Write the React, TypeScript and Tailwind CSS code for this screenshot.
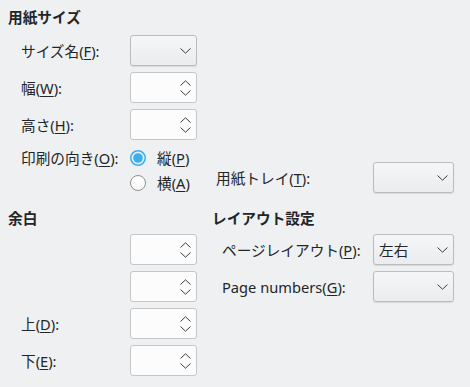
import React from 'react';

const font = '[font-family:"Noto_Sans","Noto_Sans_CJK_JP",sans-serif]';

const Chevron = ({ up = false }: { up?: boolean }) => (
  <svg width="11" height="6" viewBox="0 0 11 6" className="block">
    <path
      d={up ? 'M0.5 5.5 L5.5 0.8 L10.5 5.5' : 'M0.5 0.5 L5.5 5.2 L10.5 0.5'}
      fill="none"
      stroke="#3b3e41"
      strokeWidth="1"
    />
  </svg>
);

const Combo = ({ value = '', wide = false }: { value?: string; wide?: boolean }) => (
  <div
    className={`${wide ? 'w-[81px]' : 'w-[67px]'} h-[31px] rounded-[3px] border border-[#babcbe] bg-linear-to-b from-[#f5f6f7] to-[#ebeced] shadow-[0_1px_1px_rgba(0,0,0,0.1)] flex items-center justify-between pl-[5px] pr-[5px]`}
  >
    <span>{value}</span>
    <Chevron />
  </div>
);

const Spin = () => (
  <div className="w-[67px] h-[31px] rounded-[3px] border border-[#c4c6c8] bg-[#fcfcfc] flex flex-col items-end justify-center gap-[4px] pr-[5px]">
    <Chevron up />
    <Chevron />
  </div>
);

const Label = ({ pre, key_, post = '):' }: { pre: string; key_: string; post?: string }) => (
  <span className="whitespace-nowrap">
    {pre}
    <u className="underline-offset-2">{key_}</u>
    {post}
  </span>
);

const Radio = ({ checked }: { checked?: boolean }) => (
  <svg width="16" height="16" viewBox="0 0 16 16" className="block">
    {checked ? (
      <>
        <circle cx="8" cy="8" r="7.25" fill="#e3f1fa" stroke="#3daee9" strokeWidth="1.5" />
        <circle cx="8" cy="8" r="4.8" fill="#3daee9" />
      </>
    ) : (
      <circle cx="8" cy="8" r="7.5" fill="#fcfcfc" stroke="#8c8e90" strokeWidth="1" />
    )}
  </svg>
);

const Row = ({ children }: { children: React.ReactNode }) => (
  <div className="h-[31px] flex items-center">{children}</div>
);

export default function App() {
  return (
    <div className={`w-[470px] h-[387px] bg-[#eff0f1] text-[#232629] text-[14.67px] leading-[20px] ${font} pt-[7px] pl-[8px] overflow-hidden`}>
      {/* 用紙サイズ */}
      <div className="font-bold">用紙サイズ</div>
      <div className="mt-[8px] pl-[13px] grid grid-cols-[109px_67px_19px_157px_81px] grid-rows-[31px_31px_31px_48px] gap-y-[6px]">
        <Row><Label pre="サイズ名(" key_="F" /></Row>
        <Combo />
        <div className="col-span-3" />

        <Row><Label pre="幅(" key_="W" /></Row>
        <Spin />
        <div className="col-span-3" />

        <Row><Label pre="高さ(" key_="H" /></Row>
        <Spin />
        <div className="col-span-3" />

        <div className="h-[23px] flex items-center"><Label pre="印刷の向き(" key_="O" /></div>
        <div className="flex flex-col gap-[2px] whitespace-nowrap">
          <div className="h-[23px] flex items-center gap-[11px]">
            <Radio checked />
            <Label pre="縦(" key_="P" post=")" />
          </div>
          <div className="h-[23px] flex items-center gap-[11px]">
            <Radio />
            <Label pre="横(" key_="A" post=")" />
          </div>
        </div>
        <div />
        <div className="self-end mb-[1px] h-[31px] flex items-center"><Label pre="用紙トレイ(" key_="T" /></div>
        <div className="self-end mb-[1px]"><Combo wide /></div>
      </div>

      {/* 余白 / レイアウト設定 */}
      <div className="mt-[14px] flex">
        <div className="w-[204px]">
          <div className="font-bold">余白</div>
          <div className="mt-[6px] pl-[13px] grid grid-cols-[109px_67px] gap-y-[6px]">
            <Row />
            <Spin />
            <Row />
            <Spin />
            <Row><Label pre="上(" key_="D" /></Row>
            <Spin />
            <Row><Label pre="下(" key_="E" /></Row>
            <Spin />
          </div>
        </div>
        <div>
          <div className="font-bold">レイアウト設定</div>
          <div className="mt-[6px] pl-[10px] grid grid-cols-[151px_81px] gap-y-[6px]">
            <Row><Label pre="ページレイアウト(" key_="P" /></Row>
            <Combo wide value="左右" />
            <Row><Label pre="Page numbers(" key_="G" /></Row>
            <Combo wide />
          </div>
        </div>
      </div>
    </div>
  );
}
